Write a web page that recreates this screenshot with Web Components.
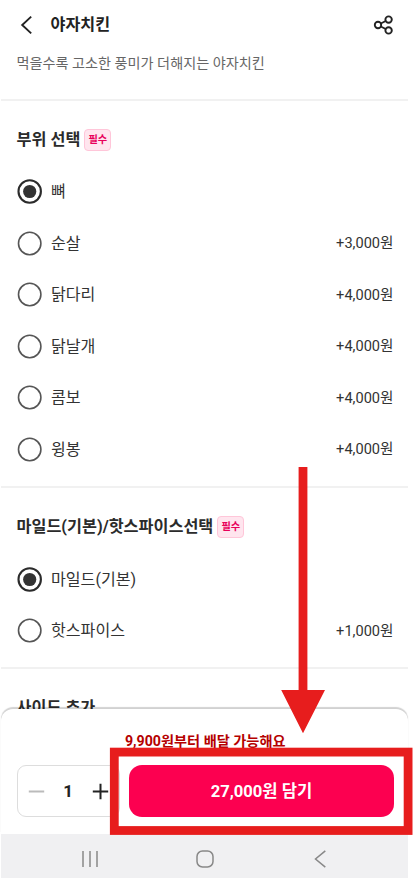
<!DOCTYPE html>
<html lang="ko">
<head>
<meta charset="utf-8">
<title>야자치킨</title>
<style>
html,body{margin:0;padding:0;background:#fff;overflow:hidden}
body{font-family:Roboto,"Noto Sans CJK KR",sans-serif;color:#333}
</style>
</head>
<body>
<menu-screen></menu-screen>
<script>
const define = (name, html, setup) => customElements.define(name, class extends HTMLElement {
  connectedCallback() {
    if (this.shadowRoot) return;
    const t = document.createElement('template');
    t.innerHTML = html;
    this.attachShadow({mode: 'open'}).append(t.content.cloneNode(true));
    if (setup) setup(this, this.shadowRoot);
  }
});

define('app-header', `
<style>
:host{display:block;box-sizing:border-box;height:98.5px;padding:0 13px 0 16px}
.bar{display:flex;align-items:center;height:49px}
.back{width:20px;height:20px;margin-right:14px}
h1{flex:1;margin:0;font-size:16.2px;line-height:24px;font-weight:700;color:#222}
.share{width:22px;height:22px}
p{margin:3px 0 0;font-size:14.15px;line-height:22px;color:#666;white-space:nowrap}
svg{display:block;fill:none;stroke:#222}
</style>
<div class="bar">
<svg class="back" viewBox="0 0 20 20" stroke-width="1.9"><path d="M14.2 1.6 5.2 10l9 8.4"/></svg>
<h1><slot name="title"></slot></h1>
<svg class="share" viewBox="0 0 22 22" stroke-width="1.9"><circle cx="5" cy="11" r="3.2"/><circle cx="15.6" cy="5.6" r="3.2"/><circle cx="15.6" cy="16.4" r="3.2"/><path d="m7.8 9.5 4.9-2.5M7.8 12.5l4.9 2.5"/></svg>
</div>
<p><slot></slot></p>`);

define('required-badge', `
<style>:host{display:inline-flex;box-sizing:border-box;width:27px;height:22px;align-items:center;justify-content:center;border:1px solid #ffc6d9;border-radius:4px;background:#ffe5ee;color:#e8005a;font-size:10.2px;font-weight:700;line-height:14px}</style>
<slot></slot>`);

define('option-group', `
<style>
:host{display:block;box-sizing:border-box;border-top:2px solid #f1f1f1;padding:27px 14px 0 15.5px;height:var(--group-height)}
header{display:flex;align-items:center;gap:4px;height:24px;margin-bottom:14.5px}
h2{margin:0;font-size:16.25px;line-height:24px;font-weight:700;color:#2b2b2b;white-space:nowrap}
</style>
<header><h2><slot name="title"></slot></h2><slot name="badge"></slot></header>
<slot></slot>`);

define('radio-option', `
<style>
:host{display:flex;align-items:center;height:51.5px;font-size:16.1px;line-height:24px;color:#333}
svg{width:25px;height:25px;margin-right:9.5px;fill:none;stroke:#555;stroke-width:1.6}
circle + circle{display:none}
:host([checked]) svg{stroke:#2b2b2b;stroke-width:2.1}
:host([checked]) circle + circle{display:inline;fill:#333;stroke:none}
span{flex:1;padding-top:1px}
b{font-weight:400;font-size:14.6px}
</style>
<svg viewBox="0 0 25 25"><circle cx="12.7" cy="12.5" r="11.2"/><circle cx="12.7" cy="12.5" r="6.6"/></svg><span><slot></slot></span><b></b>`, (el, root) => {
  root.querySelector('b').textContent = el.getAttribute('price') || '';
});

define('quantity-stepper', `
<style>
:host{display:flex;box-sizing:border-box;width:103px;height:52px;border:1px solid #ddd;border-radius:9px;align-items:center;padding:0 9.5px 0 10px;justify-content:space-between;font-size:17px;font-weight:700;color:#222}
svg{width:17px;height:17px;fill:none;stroke-width:2}
</style>
<svg viewBox="0 0 17 17" stroke="#bbb"><path d="M.8 8.5h15.4"/></svg>
<span><slot></slot></span>
<svg viewBox="0 0 17 17" stroke="#222"><path d="M.8 8.5h15.4M8.5.8v15.4"/></svg>`);

define('order-sheet', `
<style>
:host{display:block;box-sizing:border-box;height:126px;border-radius:12px 12px 0 0;background:#fff;box-shadow:0 -2px 1px #0000002e;padding:21px 13.5px 0 15.5px}
p{margin:0 0 12px;font-size:14.2px;line-height:23px;font-weight:700;color:#b50000;text-align:center;white-space:nowrap}
div{display:flex;justify-content:space-between;align-items:center}
button{width:265px;height:52px;border:0;border-radius:13px;background:#fc0050;color:#fff;font:700 16.6px/24px Roboto,"Noto Sans CJK KR",sans-serif;padding:2px 0 0}
</style>
<p><slot name="notice"></slot></p>
<div><quantity-stepper>1</quantity-stepper><button><slot></slot></button></div>`);

define('system-nav', `
<style>
:host{display:flex;height:44px;background:#f0f0f2;align-items:center;justify-content:space-between;padding:5px 78px 0 78.5px;box-sizing:border-box}
svg{width:20px;height:20px;fill:none;stroke:#888;stroke-width:1.5}
</style>
<svg viewBox="0 0 20 20"><path d="M3 2v16M10 2v16M17 2v16"/></svg>
<svg viewBox="0 0 20 20"><rect x="2" y="2" width="16" height="16" rx="5.5"/></svg>
<svg viewBox="0 0 20 20"><path d="M15.3 1.8 5.5 10l9.8 8.2"/></svg>`);

define('guide-marks', `
<style>:host{display:block;position:absolute;inset:0;pointer-events:none}svg{display:block}</style>
<svg width="413" height="878" viewBox="0 0 413 878"><rect x="114.3" y="752.1" width="293.8" height="78.4" fill="none" stroke="#e71d1d" stroke-width="8.8"/><path fill="#e71d1d" d="M298.6 467h8.8v223H325l-22 43.2L281.2 690h17.4z"/></svg>`);

define('menu-screen', `
<style>
:host{display:flex;flex-direction:column;position:relative;width:413px;height:878px;overflow:hidden;background:#fff}
main{width:406.5px;margin-left:1px;height:709px;overflow:hidden;flex:none}
app-header{margin-left:-.5px}
option-group{--group-height:387.5px}
option-group:nth-of-type(2){--group-height:181px}
order-sheet,system-nav{width:406.5px;margin-left:1px;flex:none}
order-sheet{height:125px}
</style>
<main>
<app-header><span slot="title">야자치킨</span>먹을수록 고소한 풍미가 더해지는 야자치킨</app-header>
<option-group><span slot="title">부위 선택</span><required-badge slot="badge">필수</required-badge>
<radio-option checked>뼈</radio-option>
<radio-option price="+3,000원">순살</radio-option>
<radio-option price="+4,000원">닭다리</radio-option>
<radio-option price="+4,000원">닭날개</radio-option>
<radio-option price="+4,000원">콤보</radio-option>
<radio-option price="+4,000원">윙봉</radio-option>
</option-group>
<option-group><span slot="title">마일드(기본)/핫스파이스선택</span><required-badge slot="badge">필수</required-badge>
<radio-option checked>마일드(기본)</radio-option>
<radio-option price="+1,000원">핫스파이스</radio-option>
</option-group>
<option-group><span slot="title">사이드 추가</span></option-group>
</main>
<order-sheet><span slot="notice">9,900원부터 배달 가능해요</span>27,000원 담기</order-sheet>
<system-nav></system-nav>
<guide-marks></guide-marks>`);
</script>
</body>
</html>
